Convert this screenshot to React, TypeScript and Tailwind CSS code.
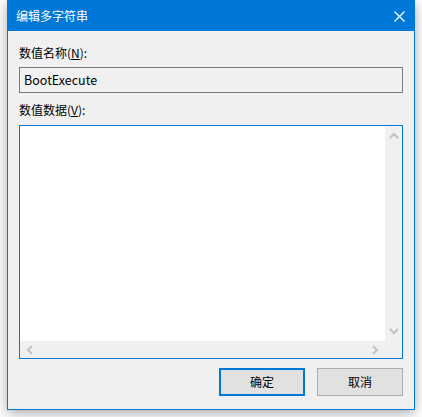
import React from "react";

// ── Small chevrons used by the scrollbars ───────────────────────────────────
function Chevron({ dir }: { dir: "up" | "down" | "left" | "right" }) {
  const paths: Record<string, string> = {
    up: "M1 6 L5 2 L9 6",
    down: "M1 2 L5 6 L9 2",
    left: "M6 1 L2 5 L6 9",
    right: "M2 1 L6 5 L2 9",
  };
  const vertical = dir === "up" || dir === "down";
  return (
    <svg
      width={vertical ? 10 : 8}
      height={vertical ? 8 : 10}
      viewBox={vertical ? "0 0 10 8" : "0 0 8 10"}
      fill="none"
      stroke="#c2c2c2"
      strokeWidth={2}
    >
      <path d={paths[dir]} />
    </svg>
  );
}

export default function App() {
  return (
    <div
      className="w-[422px] h-[417px] bg-white pl-[7px] overflow-hidden"
      style={{ fontFamily: '"Noto Sans CJK SC", "Noto Sans", sans-serif' }}
    >
      {/* ── Dialog window ─────────────────────────────────────────────── */}
      <div className="w-[408px] h-[410px] border border-[#0078d7] bg-[#f0f0f0] flex flex-col shadow-[0_3px_12px_rgba(0,0,0,0.35)]">
        {/* Title bar */}
        <div className="h-[30px] bg-[#0078d7] flex items-center justify-between pl-[8px] pr-[9px] shrink-0">
          <span className="text-white text-[12px] leading-none">编辑多字符串</span>
          <svg width="11" height="11" viewBox="0 0 11 11" stroke="white" strokeWidth={1.2}>
            <path d="M0.5 0.5 L10.5 10.5 M10.5 0.5 L0.5 10.5" />
          </svg>
        </div>

        {/* Body */}
        <div className="flex flex-col px-[11px] text-[12px] text-black">
          <div className="h-[16px] mt-[14px] leading-[16px]">
            数值名称(<span className="underline">N</span>):
          </div>
          <div className="mt-[6px] h-[26px] border border-[#7a7a7a] bg-[#f0f0f0] flex items-center pl-[4px] text-[12.5px]">
            BootExecute
          </div>
          <div className="h-[16px] mt-[9px] leading-[16px]">
            数值数据(<span className="underline">V</span>):
          </div>

          {/* Multi-line text area with scrollbars */}
          <div className="mt-[7px] h-[234px] border border-[#0078d7] bg-white flex flex-col">
            <div className="flex flex-1 min-h-0">
              <div className="flex-1" />
              <div className="w-[17px] bg-[#f0f0f0] flex flex-col items-center justify-between py-[6px]">
                <Chevron dir="up" />
                <Chevron dir="down" />
              </div>
            </div>
            <div className="h-[17px] flex">
              <div className="flex-1 bg-[#f0f0f0] flex items-center justify-between px-[6px]">
                <Chevron dir="left" />
                <Chevron dir="right" />
              </div>
              <div className="w-[17px] bg-[#f0f0f0]" />
            </div>
          </div>

          {/* Buttons */}
          <div className="mt-[9px] flex justify-end gap-[12px]">
            <button className="w-[86px] h-[28px] border-2 border-[#0078d7] bg-[#e1e1e1] text-[12px]">
              确定
            </button>
            <button className="w-[86px] h-[28px] border border-[#adadad] bg-[#e1e1e1] text-[12px]">
              取消
            </button>
          </div>
        </div>
      </div>
    </div>
  );
}
